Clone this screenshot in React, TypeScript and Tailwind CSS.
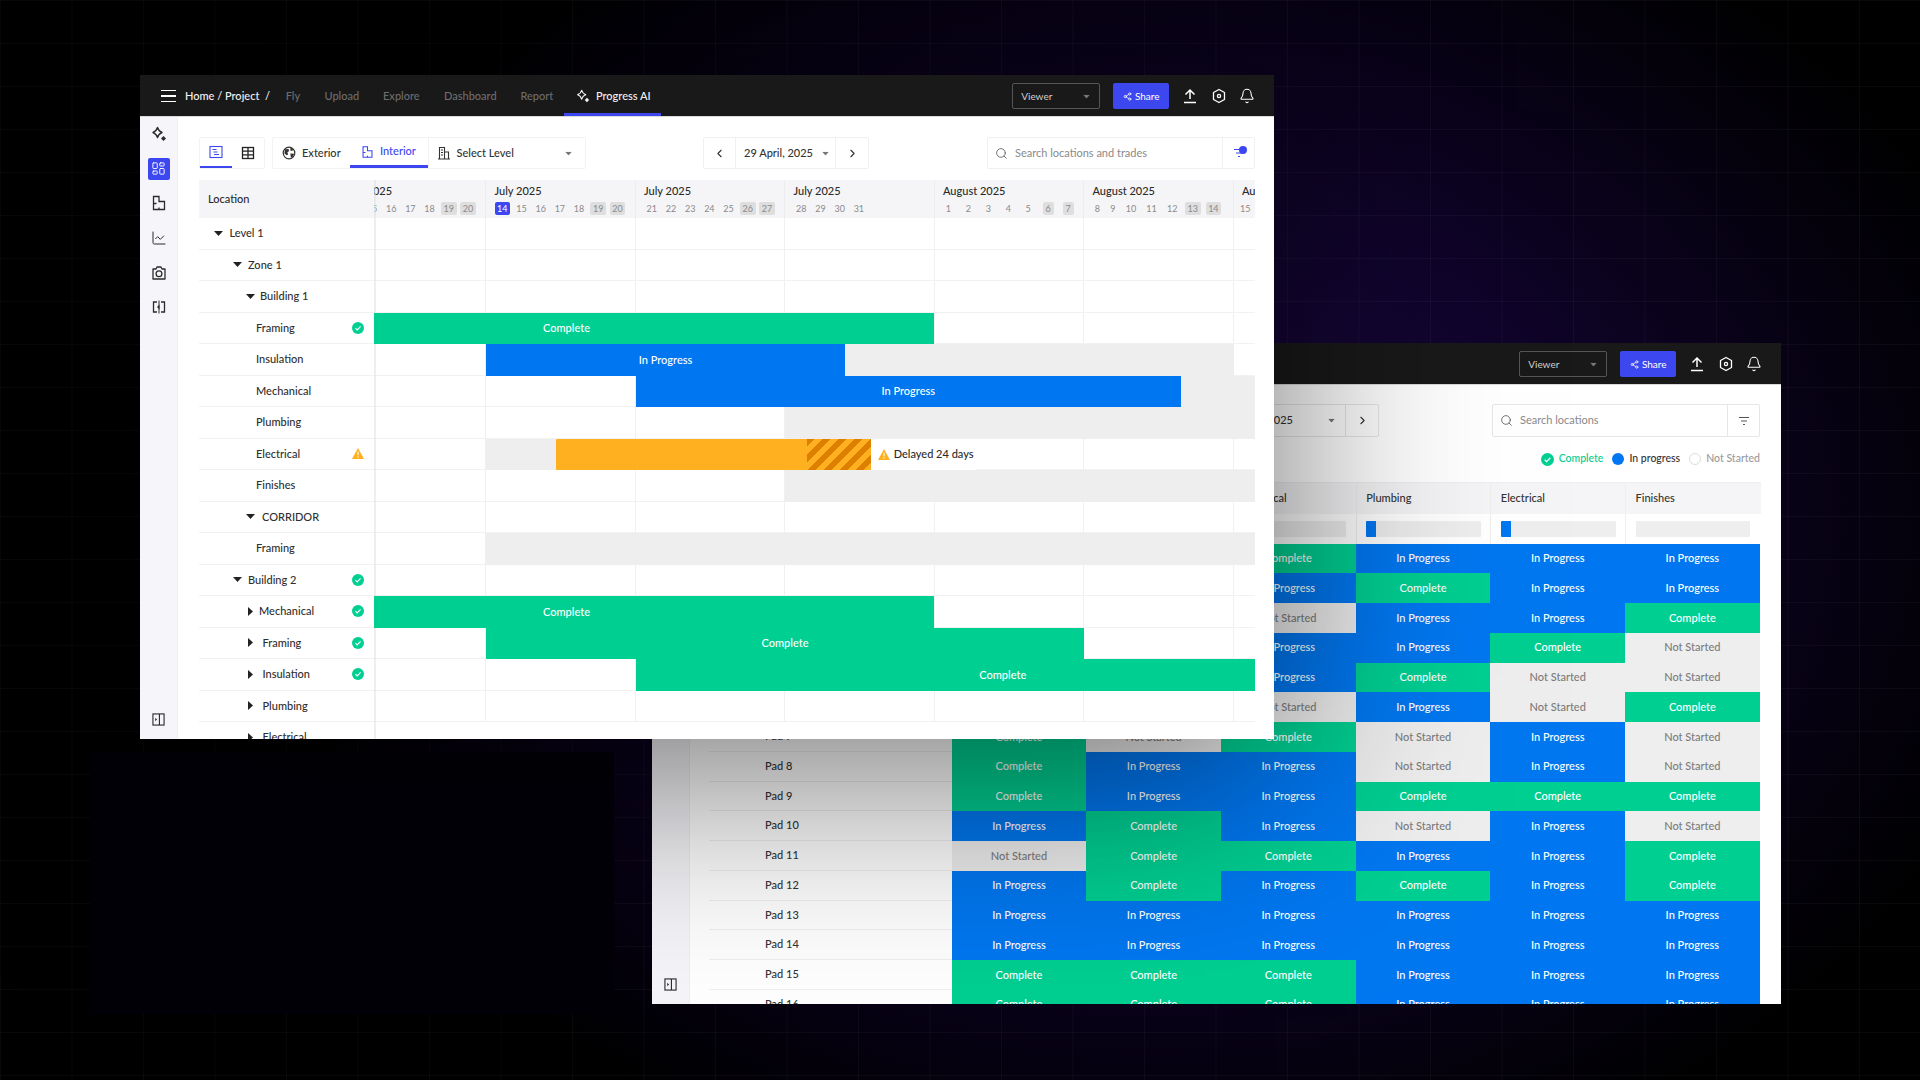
import { Bell, ChartLine, ChevronLeft, ChevronRight, LayoutDashboard, Search, Share2 } from 'lucide-react';

type Status = 'C' | 'P' | 'N';

const Sparkle = ({ className = 'w-4 h-4' }: { className?: string }) => (
  <svg viewBox="0 0 16 16" className={className} fill="none" stroke="currentColor" strokeWidth="1.4">
    <path d="M6.5 1.5 Q7.5 5 11 6.5 Q7.5 8 6.5 11.5 Q5.5 8 2 6.5 Q5.5 5 6.5 1.5 Z" strokeLinejoin="round" />
    <path d="M12.5 10 L15 12.5 L12.5 15 L10 12.5 Z" fill="currentColor" stroke="none" />
  </svg>
);

const FloorPlan = ({ className = 'w-4 h-4' }: { className?: string }) => (
  <svg viewBox="0 0 16 16" className={className} fill="none" stroke="currentColor" strokeWidth="1.3">
    <path d="M2.5 1.5h5.5v5h5.5v8h-11z" />
    <path d="M2.5 8.5h3M8 12.5v2" />
  </svg>
);

const CameraIcon = () => (
  <svg viewBox="0 0 16 16" className="w-4 h-4" fill="none" stroke="currentColor" strokeWidth="1.3">
    <path d="M2 4h3l1-2h4l1 2h3v10H2z" strokeLinejoin="round" />
    <circle cx="8" cy="8.8" r="2.9" />
  </svg>
);

const Compare = () => (
  <svg viewBox="0 0 16 16" className="w-4 h-4" fill="none" stroke="currentColor" strokeWidth="1.3">
    <path d="M6 3H2.5v10H6M10 3h3.5v10H10" />
    <path d="M8 1.5v13" strokeWidth="1" />
    <path d="M6 8l2.5-2.5v5z" fill="currentColor" stroke="none" />
  </svg>
);

const PanelToggle = () => (
  <svg viewBox="0 0 14 14" className="w-[13px] h-[13px]" fill="none" stroke="currentColor" strokeWidth="1.2">
    <rect x="1" y="1" width="12" height="12" />
    <path d="M8 1v12" />
    <path d="M3.5 5l2 2-2 2z" fill="currentColor" stroke="none" />
  </svg>
);

const GanttIcon = () => (
  <svg viewBox="0 0 14 14" className="w-[14px] h-[14px]" fill="none" stroke="currentColor" strokeWidth="1.1">
    <rect x="1" y="1.5" width="12" height="11" />
    <path d="M3.5 4.5h4M4.5 7h4M5 9.5h5" strokeWidth="1.2" />
  </svg>
);

const TableIcon = () => (
  <svg viewBox="0 0 14 14" className="w-[14px] h-[14px]" fill="none" stroke="currentColor" strokeWidth="1.3">
    <rect x="1.5" y="1.5" width="11" height="11" />
    <path d="M1.5 5.2h11M1.5 8.8h11M7 1.5v11" />
  </svg>
);

const GlobeIcon = () => (
  <svg viewBox="0 0 14 14" className="w-[14px] h-[14px] shrink-0" fill="none" stroke="currentColor" strokeWidth="1.2">
    <circle cx="7" cy="7" r="5.8" />
    <path d="M3 3.2 6.5 3l.6 2-1.7 1.2.7 2.2-1.4.8L2.4 7.4z" fill="currentColor" stroke="none" />
    <path d="M8.5 1.6l2.6 1.8-.8 1.6-2-.6zM8.4 7.4l3.8.4-1.4 3-2 1z" fill="currentColor" stroke="none" />
  </svg>
);

const BuildingIcon = () => (
  <svg viewBox="0 0 14 14" className="w-[14px] h-[14px]" fill="none" stroke="currentColor" strokeWidth="1.1">
    <path d="M1 13h12M2.5 13V1.5h5V13M7.5 6h4v7" />
    <path d="M4 4h2M4 6.5h2M4 9h2" />
  </svg>
);

const UploadIcon = () => (
  <svg viewBox="0 0 16 16" className="w-4 h-4" fill="none" stroke="currentColor" strokeWidth="1.5">
    <path d="M8 11V2M3.5 6.5 8 2l4.5 4.5M2 14.5h12" />
  </svg>
);

const GearIcon = () => (
  <svg viewBox="0 0 16 16" className="w-4 h-4" fill="none" stroke="currentColor" strokeWidth="1.3">
    <path d="M8 1.5l5.5 3v7L8 14.5l-5.5-3v-7z" strokeLinejoin="round" />
    <circle cx="8" cy="8" r="1.6" />
  </svg>
);

const FilterIcon = ({ className = 'text-[#555]' }: { className?: string }) => (
  <svg viewBox="0 0 14 14" className={`w-[14px] h-[14px] ${className}`} fill="none" stroke="currentColor" strokeWidth="1.2">
    <path d="M2 3.5h10M4 7h6M6 10.5h2" />
  </svg>
);

const CheckBadge = ({ className = 'w-3 h-3' }: { className?: string }) => (
  <svg viewBox="0 0 12 12" className={className}>
    <circle cx="6" cy="6" r="6" fill="#00CF92" />
    <path d="M3.4 6.2l1.8 1.7 3.4-3.5" fill="none" stroke="#fff" strokeWidth="1.1" />
  </svg>
);

const WarnIcon = () => (
  <svg viewBox="0 0 12 11" className="w-3 h-[11px]">
    <path d="M6 0 L12 11 L0 11 Z" fill="#FFB020" />
    <path d="M6 3.6v3.6M6 8.2v1.2" stroke="#fff" strokeWidth="1.1" />
  </svg>
);

const Caret = ({ dir, className = 'text-[#222]' }: { dir: 'down' | 'right'; className?: string }) =>
  dir === 'down' ? (
    <svg viewBox="0 0 9 5" className={`w-[9px] h-[5px] shrink-0 ${className}`}>
      <path d="M0 0h9L4.5 5z" fill="currentColor" />
    </svg>
  ) : (
    <svg viewBox="0 0 5 9" className={`w-[5px] h-[9px] shrink-0 ${className}`}>
      <path d="M0 0v9l5-4.5z" fill="currentColor" />
    </svg>
  );

const Header = ({ showNav }: { showNav: boolean }) => (
  <div className="h-[42px] shrink-0 bg-[#191919] flex items-center pr-[19px] pt-[1px] text-[11px] border-b border-[#d9d9d9]">
    {showNav && (
      <>
        <div className="ml-[21px] w-[15px] flex flex-col gap-[4px]">
          <span className="h-[1.5px] bg-white" />
          <span className="h-[1.5px] bg-white" />
          <span className="h-[1.5px] bg-white" />
        </div>
        <div className="ml-[9px] w-[100.7px] text-[#f2f2f2] font-medium whitespace-nowrap">Home / Project&nbsp; /</div>
        <div className="w-[38.8px] text-[#6d6d6d] font-medium">Fly</div>
        <div className="w-[58.5px] text-[#6d6d6d] font-medium">Upload</div>
        <div className="w-[61px] text-[#6d6d6d] font-medium">Explore</div>
        <div className="w-[76.4px] text-[#6d6d6d] font-medium">Dashboard</div>
        <div className="w-[44.1px] text-[#6d6d6d] font-medium">Report</div>
        <div className="w-[96.3px] h-full flex items-center pl-[11.5px] gap-[6px] text-[#f2f2f2] font-medium border-b-[3px] border-[#3D47F0] pt-[3px]">
          <Sparkle className="w-[14px] h-[14px]" />
          Progress AI
        </div>
      </>
    )}
    <div className="ml-auto w-[88px] h-[26px] flex items-center justify-between px-2 border border-[#555] rounded-[2px] text-[#cfcfcf] text-[10px]">
      Viewer
      <Caret dir="down" className="text-[#777] scale-75" />
    </div>
    <div className="ml-[13px] w-[56px] h-[26px] flex items-center justify-center gap-[3px] bg-[#3D47F0] rounded-[2px] text-white text-[10px]">
      <Share2 className="w-[9px] h-[9px]" />
      Share
    </div>
    <div className="ml-[13px] flex items-center gap-[12.4px] text-white">
      <UploadIcon />
      <GearIcon />
      <Bell className="w-4 h-4" strokeWidth={1.6} />
    </div>
  </div>
);

const months = [
  { label: 'July 2025', days: [14, 15, 16, 17, 18, 19, 20], off: [19, 20], pad: 'pl-[8.5px]', gap: 'gap-[3.6px]' },
  { label: 'July 2025', days: [14, 15, 16, 17, 18, 19, 20], off: [19, 20], pad: 'pl-[8.5px]', gap: 'gap-[3.6px]' },
  { label: 'July 2025', days: [21, 22, 23, 24, 25, 26, 27], off: [26, 27], pad: 'pl-[8.5px]', gap: 'gap-[3.6px]' },
  { label: 'July 2025', days: [28, 29, 30, 31], off: [], pad: 'pl-[8.5px]', gap: 'gap-[3.6px]' },
  { label: 'August 2025', days: [1, 2, 3, 4, 5, 6, 7], off: [6, 7], pad: 'pl-[8.5px]', gap: 'gap-[9.4px]' },
  { label: 'August 2025', days: [8, 9, 10, 11, 12, 13, 14], off: [13, 14], pad: 'pl-[8px]', gap: 'gap-[5px]' },
  { label: 'August 2025', days: [15], off: [], pad: 'pl-[4px]', gap: 'gap-[3.6px]' },
];

const tree: { label: string; pad: string; gap?: string; caret?: 'down' | 'right'; mark?: 'ok' | 'warn' }[] = [
  { label: 'Level 1', pad: 'pl-[15.4px]', gap: 'gap-[6px]', caret: 'down' },
  { label: 'Zone 1', pad: 'pl-[34px]', gap: 'gap-[6px]', caret: 'down' },
  { label: 'Building 1', pad: 'pl-[47px]', gap: 'gap-[5px]', caret: 'down' },
  { label: 'Framing', pad: 'pl-[57px]', mark: 'ok' },
  { label: 'Insulation', pad: 'pl-[57px]' },
  { label: 'Mechanical', pad: 'pl-[57px]' },
  { label: 'Plumbing', pad: 'pl-[57px]' },
  { label: 'Electrical', pad: 'pl-[57px]', mark: 'warn' },
  { label: 'Finishes', pad: 'pl-[57px]' },
  { label: 'CORRIDOR', pad: 'pl-[47px]', gap: 'gap-[7px]', caret: 'down' },
  { label: 'Framing', pad: 'pl-[57px]' },
  { label: 'Building 2', pad: 'pl-[34px]', gap: 'gap-[6px]', caret: 'down', mark: 'ok' },
  { label: 'Mechanical', pad: 'pl-[48.5px]', gap: 'gap-[6.5px]', caret: 'right', mark: 'ok' },
  { label: 'Framing', pad: 'pl-[48.5px]', gap: 'gap-[10px]', caret: 'right', mark: 'ok' },
  { label: 'Insulation', pad: 'pl-[48.5px]', gap: 'gap-[10px]', caret: 'right', mark: 'ok' },
  { label: 'Plumbing', pad: 'pl-[48.5px]', gap: 'gap-[10px]', caret: 'right' },
  { label: 'Electrical', pad: 'pl-[48.5px]', gap: 'gap-[10px]', caret: 'right' },
];

// from and to are page pixels, GANTT_LEFT turns them into offsets from the first month
const bars: Record<number, { from: number; to: number; color: string; label?: string }[]> = {
  3: [{ from: 199, to: 934, color: 'bg-[#00CF92]', label: 'Complete' }],
  4: [
    { from: 845, to: 1233.5, color: 'bg-[#EEEEEE]' },
    { from: 486, to: 845, color: 'bg-[#0077F0]', label: 'In Progress' },
  ],
  5: [
    { from: 1181, to: 1300, color: 'bg-[#EEEEEE]' },
    { from: 635.5, to: 1181, color: 'bg-[#0077F0]', label: 'In Progress' },
  ],
  6: [{ from: 785, to: 1300, color: 'bg-[#EEEEEE]' }],
  7: [{ from: 486, to: 556, color: 'bg-[#EEEEEE]' }],
  8: [{ from: 785, to: 1300, color: 'bg-[#EEEEEE]' }],
  10: [{ from: 486, to: 1300, color: 'bg-[#EEEEEE]' }],
  12: [{ from: 199, to: 934, color: 'bg-[#00CF92]', label: 'Complete' }],
  13: [{ from: 486, to: 1084, color: 'bg-[#00CF92]', label: 'Complete' }],
  14: [{ from: 635.5, to: 1370, color: 'bg-[#00CF92]', label: 'Complete' }],
};

const GANTT_LEFT = 336.5;

const Gantt = () => (
  <div className="relative flex-1 min-w-0 overflow-hidden">
    <div className="ml-[-37.5px] w-[1046.5px]">
      <div className="flex h-[38px] bg-[#F5F5F7]">
        {months.map((m, i) => (
          <div key={i} className="w-[149.5px] shrink-0 border-r border-[#EDEDED] pt-[3px] whitespace-nowrap">
            <div className="pl-[8.5px] h-[15px] text-[11px] leading-[15px] font-medium text-[#2b2b2b]">{m.label}</div>
            <div className={`flex mt-[4px] ${m.pad} ${m.gap}`}>
              {m.days.map((d) => (
                <span
                  key={d}
                  className={`h-[13px] rounded-[2px] text-[9px] leading-[13px] text-center ${d < 10 ? 'w-[10.6px]' : 'w-[15.6px]'} ${
                    i === 1 && d === 14 ? 'bg-[#3D47F0] text-white' : m.off.includes(d) ? 'bg-[#DEDEDE] text-[#8a8a8a]' : 'text-[#8a8a8a]'
                  }`}
                >
                  {d}
                </span>
              ))}
            </div>
          </div>
        ))}
      </div>
      {Array.from({ length: 16 }, (_, row) => (
        <div key={row} className="flex h-[31.5px] border-b border-[#F2F2F2]">
          {months.map((_, i) => (
            <div key={i} className="w-[149.5px] shrink-0 border-r border-[#F0F0F0]" />
          ))}
        </div>
      ))}
    </div>
    {/* shade of the frozen column, under the bars */}
    <div className="absolute left-0 top-0 bottom-0 w-[2px] bg-[#DDDDDD]/50" />
    <div className="absolute left-[-37.5px] top-[38px] w-[1046.5px]">
      {Array.from({ length: 16 }, (_, row) => (
        <div key={row} className="relative h-[31.5px]">
          {(bars[row] ?? []).map((b, i) => (
            <div
              key={i}
              className={`absolute top-0 bottom-0 flex items-center justify-center text-white text-[11px] font-medium ${b.color}`}
              style={{ left: b.from - GANTT_LEFT, width: b.to - b.from }}
            >
              {b.label}
            </div>
          ))}
          {row === 7 && (
            <div className="absolute top-0 bottom-0 left-[219.5px] flex items-center whitespace-nowrap">
              <div className="w-[314.7px] h-full flex justify-end bg-[#FFB020] rounded-[1px]">
                <div className="w-[63.7px] h-full bg-[repeating-linear-gradient(135deg,#DD8000_0,#DD8000_5.6px,#FFB020_5.6px,#FFB020_11.3px)]" />
              </div>
              <div className="h-full pl-[7px] pr-[2px] flex items-center gap-[4px] bg-white text-[11px] text-[#2b2b2b] font-medium">
                <WarnIcon />
                Delayed 24 days
              </div>
            </div>
          )}
        </div>
      ))}
    </div>
  </div>
);

const TreeColumn = () => (
  <div className="w-[175px] shrink-0 bg-white">
    <div className="h-[38px] bg-[#F5F5F7] flex items-center pl-[9px] text-[11px] font-medium text-[#2b2b2b]">Location</div>
    {tree.map((r, i) => (
      <div key={i} className={`h-[31.5px] flex items-center border-b border-[#F2F2F2] pr-[10px] text-[11px] font-medium text-[#2f2f2f] ${r.pad} ${r.gap ?? ''}`}>
        {r.caret && <Caret dir={r.caret} />}
        <span>{r.label}</span>
        {r.mark === 'ok' && <CheckBadge className="ml-auto w-3 h-3" />}
        {r.mark === 'warn' && (
          <span className="ml-auto">
            <WarnIcon />
          </span>
        )}
      </div>
    ))}
  </div>
);

const Toolbar = () => (
  <div className="flex h-[32px] shrink-0 text-[11px] text-[#333] font-medium">
    <div className="flex border border-[#F3F3F3] rounded-[2px]">
      <div className="w-[32px] flex items-center justify-center border-b-2 border-[#3D47F0] text-[#3D47F0]">
        <GanttIcon />
      </div>
      <div className="w-[32px] flex items-center justify-center text-[#222]">
        <TableIcon />
      </div>
    </div>
    <div className="ml-[7px] flex border border-[#F3F3F3] rounded-[2px]">
      <div className="w-[77px] flex items-center pl-[9px] gap-[6px]">
        <GlobeIcon />
        Exterior
      </div>
      <div className="w-[77.5px] flex items-center pl-[11px] gap-[6px] border-b-[3px] border-[#3D47F0] text-[#3D47F0]">
        <FloorPlan className="w-[13px] h-[14px] shrink-0" />
        Interior
      </div>
      <div className="w-[157.5px] flex items-center pl-[8px] gap-[6px] border-l border-[#F3F3F3]">
        <BuildingIcon />
        Select Level
        <Caret dir="down" className="ml-auto mr-[12px] text-[#777] scale-75" />
      </div>
    </div>
    <div className="ml-[117px] flex border border-[#F0F0F0] rounded-[2px]">
      <div className="w-[32px] flex items-center justify-center border-r border-[#F0F0F0]">
        <ChevronLeft className="w-[13px] h-[13px]" strokeWidth={2} />
      </div>
      <div className="w-[99px] flex items-center pl-[8px] gap-[8px] whitespace-nowrap">
        29 April, 2025
        <Caret dir="down" className="text-[#777] scale-75" />
      </div>
      <div className="w-[33px] flex items-center justify-center border-l border-[#F0F0F0]">
        <ChevronRight className="w-[13px] h-[13px]" strokeWidth={2} />
      </div>
    </div>
    <div className="ml-[118px] flex w-[268px] border border-[#F0F0F0] rounded-[2px] text-[#8a8a8a] font-normal">
      <div className="flex-1 flex items-center pl-[7px] gap-[7px]">
        <Search className="w-[13px] h-[13px] text-[#555]" strokeWidth={1.5} />
        Search locations and trades
      </div>
      <div className="relative w-[32px] flex items-center justify-center border-l border-[#F0F0F0]">
        <FilterIcon className="text-[#3D47F0]" />
        <span className="absolute top-[8px] right-[7px] w-[8px] h-[8px] rounded-full bg-[#3D47F0]" />
      </div>
    </div>
  </div>
);

const SideIcon = ({ active, children }: { active?: boolean; children: React.ReactNode }) => (
  <div className={`w-[22px] h-[22px] flex items-center justify-center rounded-[2px] ${active ? 'bg-[#3D47F0] text-white' : 'text-[#2b2b2b]'}`}>{children}</div>
);

const ProgressWindow = () => (
  <div className="absolute left-[140px] top-[75px] z-10 w-[1134px] h-[664px] flex flex-col overflow-hidden bg-white shadow-[0_36px_200px_rgba(0,0,0,0.55)]">
    <Header showNav />
    <div className="flex flex-1 min-h-0">
      <div className="w-[38px] shrink-0 bg-[#F6F6FA] border-r border-[#EFEFF3] flex flex-col items-center pt-[6px] gap-[12.7px]">
        <SideIcon>
          <Sparkle />
        </SideIcon>
        <SideIcon active>
          <LayoutDashboard className="w-[15px] h-[15px]" strokeWidth={1.5} />
        </SideIcon>
        <SideIcon>
          <FloorPlan />
        </SideIcon>
        <SideIcon>
          <ChartLine className="w-4 h-4" strokeWidth={1.5} />
        </SideIcon>
        <SideIcon>
          <CameraIcon />
        </SideIcon>
        <SideIcon>
          <Compare />
        </SideIcon>
        <div className="mt-auto mb-[13px] text-[#2b2b2b]">
          <PanelToggle />
        </div>
      </div>
      <div className="flex-1 min-w-0 pt-[20px] pl-[21px] pr-[19px] flex flex-col overflow-hidden">
        <Toolbar />
        <div className="mt-[11px] flex">
          <TreeColumn />
          <Gantt />
        </div>
      </div>
    </div>
  </div>
);

const cellStyle: Record<Status, { text: string; className: string }> = {
  C: { text: 'Complete', className: 'bg-[#00CF92] text-white' },
  P: { text: 'In Progress', className: 'bg-[#0077F0] text-white' },
  N: { text: 'Not Started', className: 'bg-[#EEEEEE] text-[#7c7c7c]' },
};

const columns = ['Framing', 'Insulation', 'Mechanical', 'Plumbing', 'Electrical', 'Finishes'];

const pads: Status[][] = [
  ['P', 'P', 'C', 'P', 'P', 'P'],
  ['P', 'P', 'P', 'C', 'P', 'P'],
  ['P', 'P', 'N', 'P', 'P', 'C'],
  ['P', 'P', 'P', 'P', 'C', 'N'],
  ['P', 'P', 'P', 'C', 'N', 'N'],
  ['P', 'P', 'N', 'P', 'N', 'C'],
  ['C', 'N', 'C', 'N', 'P', 'N'],
  ['C', 'P', 'P', 'N', 'P', 'N'],
  ['C', 'P', 'P', 'C', 'C', 'C'],
  ['P', 'C', 'P', 'N', 'P', 'N'],
  ['N', 'C', 'C', 'P', 'P', 'C'],
  ['P', 'C', 'P', 'C', 'P', 'C'],
  ['P', 'P', 'P', 'P', 'P', 'P'],
  ['P', 'P', 'P', 'P', 'P', 'P'],
  ['C', 'C', 'C', 'P', 'P', 'P'],
  ['C', 'C', 'C', 'P', 'P', 'P'],
];

const TableWindow = () => (
  <div className="absolute left-[652px] top-[343px] w-[1129px] h-[661px] flex flex-col overflow-hidden bg-white">
    <Header showNav={false} />
    <div className="flex flex-1 min-h-0">
      <div className="w-[38px] shrink-0 bg-[#F6F6FA] border-r border-[#EFEFF3] flex flex-col items-center justify-end pb-[13px] text-[#2b2b2b]">
        <PanelToggle />
      </div>
      <div className="flex-1 min-w-0 pt-[19px] pl-[18.6px] pr-[21px] flex flex-col overflow-hidden text-[11px] text-[#333]">
        <div className="flex justify-end h-[33px] shrink-0 font-medium">
          <div className="flex border border-[#E6E6E6] rounded-[2px]">
            <div className="w-[32px] flex items-center justify-center border-r border-[#E6E6E6]">
              <ChevronLeft className="w-[13px] h-[13px]" strokeWidth={2} />
            </div>
            <div className="w-[130px] flex items-center pl-[9px] justify-between pr-[9px] whitespace-nowrap">
              29 April, 2025
              <Caret dir="down" className="text-[#777] scale-75" />
            </div>
            <div className="w-[33px] flex items-center justify-center border-l border-[#E6E6E6]">
              <ChevronRight className="w-[13px] h-[13px]" strokeWidth={2} />
            </div>
          </div>
          <div className="ml-[113px] w-[268px] flex border border-[#E6E6E6] rounded-[2px] text-[#8a8a8a] font-normal">
            <div className="flex-1 flex items-center pl-[7px] gap-[7px]">
              <Search className="w-[13px] h-[13px] text-[#555]" strokeWidth={1.5} />
              Search locations
            </div>
            <div className="w-[32px] flex items-center justify-center border-l border-[#E6E6E6]">
              <FilterIcon />
            </div>
          </div>
        </div>
        <div className="mt-[15px] h-[14px] shrink-0 flex justify-end items-center font-medium text-[10.5px]">
          <CheckBadge className="w-[13px] h-[13px]" />
          <span className="ml-[5px] text-[#00CF92]">Complete</span>
          <span className="ml-[9px] w-3 h-3 rounded-full bg-[#0077F0]" />
          <span className="ml-[5px] text-[#333]">In progress</span>
          <span className="ml-[9px] w-3 h-3 rounded-full border border-[#DDD]" />
          <span className="ml-[5px] text-[#9a9a9a]">Not Started</span>
        </div>
        <div className="mt-[16px] w-[1052px] border-t border-[#EEE]">
          <div className="flex h-[31px] bg-[#F5F5F7] font-medium">
            <div className="w-[243px] shrink-0" />
            {columns.map((c) => (
              <div key={c} className="w-[134.7px] shrink-0 pl-[9.5px] flex items-center border-l border-[#EEE]">
                {c}
              </div>
            ))}
          </div>
          <div className="flex h-[29.6px]">
            <div className="w-[243px] shrink-0" />
            {columns.map((c, i) => (
              <div key={c} className="w-[134.7px] shrink-0 flex items-center px-[9.5px] border-l border-[#EEE]">
                <div className="w-full h-[15.7px] bg-[#EEEEEE] rounded-[1px] overflow-hidden">
                  {i === 3 || i === 4 ? <div className="w-[10px] h-full bg-[#0077F0]" /> : null}
                </div>
              </div>
            ))}
          </div>
          {pads.map((row, i) => (
            <div key={i} className="flex h-[29.75px]">
              <div className="w-[243px] shrink-0 pl-[56.5px] flex items-center border-b border-[#EFEFEF] font-medium">Pad {i + 1}</div>
              {row.map((s, j) => (
                <div key={j} className={`w-[134.7px] shrink-0 flex items-center justify-center font-medium ${cellStyle[s].className}`}>
                  {cellStyle[s].text}
                </div>
              ))}
            </div>
          ))}
        </div>
      </div>
    </div>
  </div>
);

export default function App() {
  return (
    <div className="relative w-[1920px] h-[1080px] overflow-hidden bg-black font-[Lato,sans-serif]">
      <div className="absolute inset-0 bg-[radial-gradient(ellipse_900px_700px_at_1150px_520px,#1c0845_0%,#10042c_45%,#000000_100%)]" />
      <div className="absolute inset-0 bg-[linear-gradient(to_right,rgba(255,255,255,0.03)_1px,transparent_1px),linear-gradient(to_bottom,rgba(255,255,255,0.03)_1px,transparent_1px)] bg-[size:71.5px_43px]" />
      <div className="absolute left-[90px] top-[752px] w-[524px] h-[262px] bg-[#020108]" />
      <TableWindow />
      <ProgressWindow />
    </div>
  );
}
